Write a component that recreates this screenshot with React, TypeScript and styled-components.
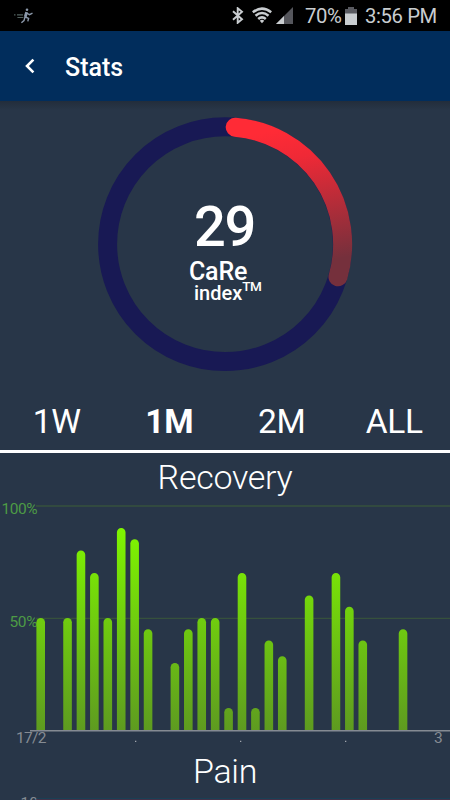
import React from "react";
import styled, { createGlobalStyle } from "styled-components";

const GlobalStyle = createGlobalStyle`
  * { box-sizing: border-box; }
  body { margin: 0; background: #283648; }
`;

const Screen = styled.main`
  width: 450px;
  height: 800px;
  overflow: hidden;
  display: flex;
  flex-direction: column;
  background: #283648;
  color: #fff;
  font-family: Roboto, "Liberation Sans", sans-serif;
`;

const StatusBar = styled.div`
  flex: none;
  height: 31px;
  padding: 0 14px;
  display: flex;
  align-items: center;
  background: #000;
  color: #c9cdd0;
`;

const StatusText = styled.span<{ $width: number }>`
  flex: none;
  width: ${(p) => p.$width}px;
  font-size: 20.3px;
  line-height: 31px;
  padding-top: 2px;
  white-space: nowrap;
  letter-spacing: -0.4px;
`;

const StatusIcon = styled.svg<{ $gap: number }>`
  flex: none;
  display: block;
  margin-right: ${(p) => p.$gap}px;
`;

const Spacer = styled.div`
  flex: 1;
`;

const AppBar = styled.header`
  flex: none;
  height: 70px;
  padding-left: 24px;
  display: flex;
  align-items: center;
  background: #012d5c;
`;

const BackButton = styled.button`
  width: 41px;
  height: 40px;
  padding: 0;
  border: 0;
  background: none;
  display: flex;
  align-items: center;
`;

const Title = styled.h1`
  margin: 0;
  padding-top: 3px;
  font-size: 25px;
  font-weight: 500;
  line-height: 30px;
`;

const Gauge = styled.section`
  flex: none;
  height: 289px;
  display: grid;
  justify-items: center;
  background: linear-gradient(#222d3b, #283648 9px);
  > * { grid-area: 1 / 1; }
`;

const GaugeLabel = styled.div`
  width: 90px;
  padding-top: 93px;
  display: flex;
  flex-direction: column;
`;

const Score = styled.span`
  margin-left: 14px;
  font-size: 56px;
  font-weight: 500;
  line-height: 66px;
  letter-spacing: -1.4px;
`;

const IndexName = styled.span`
  margin-left: 9px;
  font-size: 25px;
  font-weight: 500;
  line-height: 24px;
  letter-spacing: -0.2px;
`;

const IndexWord = styled.span`
  margin: -1px 0 0 14px;
  display: flex;
  font-size: 20px;
  font-weight: 500;
  line-height: 20px;
`;

const Mark = styled.span`
  font-size: 13.5px;
  font-weight: 500;
  line-height: 7px;
  letter-spacing: -0.4px;
`;

const Tabs = styled.nav`
  flex: none;
  height: 63px;
  display: grid;
  grid-template-columns: repeat(4, 1fr);
  border-bottom: 3px solid #fff;
`;

const Tab = styled.button<{ $active?: boolean }>`
  border: 0;
  padding: 3px 0 0 1px;
  background: none;
  color: #fff;
  font: inherit;
  font-size: 33.5px;
  line-height: 57px;
  letter-spacing: -0.3px;
  font-weight: ${(p) => (p.$active ? 700 : 400)};
`;

const SectionTitle = styled.h2<{ $height: number }>`
  flex: none;
  height: ${(p) => p.$height}px;
  margin: 0;
  padding-top: 1px;
  font-size: 34px;
  font-weight: 300;
  line-height: ${(p) => p.$height}px;
  letter-spacing: -0.3px;
  text-align: center;
`;

const Chart = styled.svg`
  flex: none;
  display: block;
`;

const bars: [number, number][] = [
  [0, 50], [2, 50], [3, 80], [4, 70], [5, 50], [6, 90], [7, 85], [8, 45],
  [10, 30], [11, 45], [12, 50], [13, 50], [14, 10], [15, 70], [16, 10],
  [17, 40], [18, 33], [20, 60], [22, 70], [23, 55], [24, 40], [27, 45],
];

const BASELINE = 230.5;

function barPath(day: number, value: number) {
  const left = 36.4 + day * 13.42;
  const top = BASELINE - value * 2.25;
  return `M${left} ${BASELINE}V${top + 4.3}a4.3 4.3 0 0 1 8.6 0V${BASELINE}z`;
}

function RunnerIcon() {
  return (
    <StatusIcon $gap={0} width="20" height="16" viewBox="0 0 20 16" fill="none" stroke="#8b98aa">
      <circle cx="13" cy="1.8" r="1.3" fill="#8b98aa" stroke="none" />
      <path d="M12.6 4.2l-1.4 4.8" strokeWidth="2.8" />
      <path d="M12.5 5l3 1.6 3-1.4M11.2 9l3.4 1.4-.8 3M11 9l-1 3.6-2.6 2.2" strokeWidth="1.4" />
      <path d="M0 6.8h1.5M3 6.8h6M3.4 9.5h6" strokeWidth="1.2" stroke="#52615f" />
    </StatusIcon>
  );
}

export default function App() {
  return (
    <>
      <GlobalStyle />
      <Screen>
        <StatusBar>
          <RunnerIcon />
          <Spacer />
          <StatusIcon $gap={8} width="12" height="17" viewBox="0 0 12 17" fill="none" stroke="#c9cdd0" strokeWidth="1.9">
            <path d="M1 4.3l9 8-4.3 3.5V1.2L10 4.7l-9 8" />
          </StatusIcon>
          <StatusIcon $gap={4} width="20" height="17" viewBox="0 0 20 17" fill="none" stroke="#c9cdd0" strokeWidth="2.5">
            <path d="M.8 5.3Q10-2 19.2 5.3M3.5 8.7Q10 3.3 16.5 8.7M6.2 12Q10 8.7 13.8 12" />
            <path d="M7.8 13.7Q10 12 12.2 13.7L10 16.3z" fill="#c9cdd0" stroke="none" />
          </StatusIcon>
          <StatusIcon $gap={12} width="17" height="17" viewBox="0 0 17 17">
            <path d="M0 17L17 0v17z" fill="#55565c" />
            <path d="M0 17l8-8v8z" fill="#c9cdd0" />
          </StatusIcon>
          <StatusText $width={40}>70%</StatusText>
          <StatusIcon $gap={8} width="12" height="18" viewBox="0 0 12 18">
            <path d="M3 0h6v2h3v5H0V2h3z" fill="#595a60" />
            <path d="M0 6.5h12V18H0z" fill="#c9cdd0" />
          </StatusIcon>
          <StatusText $width={71}>3:56 PM</StatusText>
        </StatusBar>

        <AppBar>
          <BackButton aria-label="Back">
            <svg width="12" height="16" viewBox="0 0 12 16" fill="none" stroke="#fff" strokeWidth="2.6">
              <path d="M9.4 1.6L3 8l6.4 6.4" />
            </svg>
          </BackButton>
          <Title>Stats</Title>
        </AppBar>

        <Gauge>
          <svg width="270" height="289" viewBox="90 101 270 289" fill="none">
            <defs>
              <linearGradient id="arc" gradientUnits="userSpaceOnUse" x1="250" y1="135" x2="274" y2="270">
                <stop offset="0" stopColor="#ff2b36" />
                <stop offset="0.22" stopColor="#ef2936" />
                <stop offset="1" stopColor="#75303c" />
              </linearGradient>
            </defs>
            <circle cx="225" cy="244.2" r="117.4" stroke="#181954" strokeWidth="19" />
            <path d="M235.2 127.2A117.4 117.4 0 0 1 338 276.8" stroke="url(#arc)" strokeWidth="19" strokeLinecap="round" />
          </svg>
          <GaugeLabel>
            <Score>29</Score>
            <IndexName>CaRe</IndexName>
            <IndexWord>
              index<Mark>TM</Mark>
            </IndexWord>
          </GaugeLabel>
        </Gauge>

        <Tabs>
          <Tab>1W</Tab>
          <Tab $active>1M</Tab>
          <Tab>2M</Tab>
          <Tab>ALL</Tab>
        </Tabs>

        <SectionTitle $height={47}>Recovery</SectionTitle>
        <Chart width="450" height="250" viewBox="0 0 450 250" fontSize="15.5" fill="#858b93">
          <defs>
            <linearGradient id="bar" gradientUnits="userSpaceOnUse" x1="0" y1="28" x2="0" y2="230">
              <stop offset="0" stopColor="#7ff600" />
              <stop offset="1" stopColor="#5e9b20" />
            </linearGradient>
          </defs>
          <path d="M36 6H450M36 118.4H450" stroke="#36513c" strokeWidth="1.3" />
          <g fill="#4d9b45">
            <text x="1.5" y="14" textLength="36">100%</text>
            <text x="9.5" y="126.5" textLength="28">50%</text>
          </g>
          {bars.map(([day, value]) => (
            <path key={day} d={barPath(day, value)} fill="url(#bar)" />
          ))}
          <path d="M30 230.7H450" stroke="#858b93" strokeWidth="1.4" />
          <text x="16" y="242.5" textLength="30.5">17/2</text>
          <text x="434" y="242.5">3</text>
          <path d="M135 241.3h1.3M240 241.3h1.3M345 241.3h1.3" stroke="#a0a6ad" strokeWidth="1.3" />
        </Chart>
        <SectionTitle $height={40}>Pain</SectionTitle>
        <Chart width="450" height="10" viewBox="0 0 450 10" fontSize="15.5" fill="#858b93">
          <text x="20.5" y="17.8">10</text>
          <path d="M36 8.9H450" stroke="#11475e" strokeWidth="1" />
          <path d="M36 9.7H450" stroke="#5b2a42" strokeWidth=".7" />
        </Chart>
      </Screen>
    </>
  );
}
